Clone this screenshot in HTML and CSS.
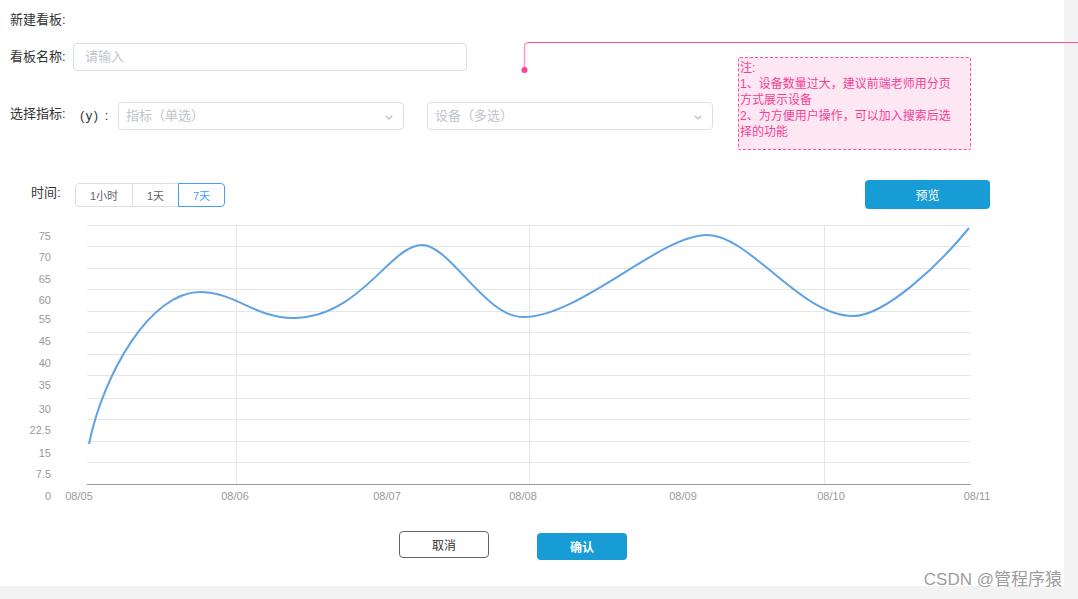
FILE: index.html
```html
<!DOCTYPE html>
<html lang="zh-CN">
<head>
<meta charset="utf-8">
<title>新建看板</title>
<link rel="stylesheet" href="styles.css">
</head>
<body>
<div class="page">
  <div class="title">新建看板:</div>

  <div class="row row-name">
    <span class="label">看板名称:</span>
    <div class="input"><span class="ph">请输入</span></div>
  </div>

  <div class="row row-metric">
    <span class="label">选择指标:</span>
    <span class="axis-tag">(y) :</span>
    <div class="select">
      <span class="ph">指标（单选）</span>
      <svg class="chev" width="8" height="5" viewBox="0 0 8 5"><polyline points="0.8,0.8 4,4 7.2,0.8" fill="none" stroke="#b4b8c0" stroke-width="1.1"/></svg>
    </div>
    <div class="select">
      <span class="ph">设备（多选）</span>
      <svg class="chev" width="8" height="5" viewBox="0 0 8 5"><polyline points="0.8,0.8 4,4 7.2,0.8" fill="none" stroke="#b4b8c0" stroke-width="1.1"/></svg>
    </div>
  </div>

  <div class="row row-time">
    <span class="time-label">时间:</span>
    <div class="seg">
      <span class="seg-btn first">1小时</span>
      <span class="seg-btn">1天</span>
      <span class="seg-btn last active">7天</span>
    </div>
    <button class="btn-preview">预览</button>
  </div>

  <svg class="chart" width="1000" height="295" viewBox="0 215 1000 295">
    <g class="grid">
      <line x1="87" x2="971" y1="225.5" y2="225.5"/>
      <line x1="87" x2="971" y1="246.5" y2="246.5"/>
      <line x1="87" x2="971" y1="268.5" y2="268.5"/>
      <line x1="87" x2="971" y1="289.5" y2="289.5"/>
      <line x1="87" x2="971" y1="311.5" y2="311.5"/>
      <line x1="87" x2="971" y1="332.5" y2="332.5"/>
      <line x1="87" x2="971" y1="354.5" y2="354.5"/>
      <line x1="87" x2="971" y1="375.5" y2="375.5"/>
      <line x1="87" x2="971" y1="398.5" y2="398.5"/>
      <line x1="87" x2="971" y1="419.5" y2="419.5"/>
      <line x1="87" x2="971" y1="441.5" y2="441.5"/>
      <line x1="87" x2="971" y1="462.5" y2="462.5"/>
      <line x1="236.5" x2="236.5" y1="225" y2="484"/>
      <line x1="529.5" x2="529.5" y1="225" y2="484"/>
      <line x1="824.5" x2="824.5" y1="225" y2="484"/>
    </g>
    <line class="axis" x1="87" x2="971" y1="484.5" y2="484.5"/>
    <g class="ylab">
      <text x="51" y="240">75</text>
      <text x="51" y="261">70</text>
      <text x="51" y="283">65</text>
      <text x="51" y="304">60</text>
      <text x="51" y="323">55</text>
      <text x="51" y="345">45</text>
      <text x="51" y="367">40</text>
      <text x="51" y="389">35</text>
      <text x="51" y="413">30</text>
      <text x="51" y="434">22.5</text>
      <text x="51" y="457">15</text>
      <text x="51" y="478">7.5</text>
      <text x="51" y="500">0</text>
    </g>
    <g class="xlab">
      <text x="79" y="500">08/05</text>
      <text x="235" y="500">08/06</text>
      <text x="387" y="500">08/07</text>
      <text x="523" y="500">08/08</text>
      <text x="683" y="500">08/09</text>
      <text x="831" y="500">08/10</text>
      <text x="977" y="500">08/11</text>
    </g>
    <path class="series" d="M89,444 C103,375 150,292 200,292 C235,292 255,318 293,318 C360,318 390,245 422,245 C450,245 485,317 523,317 C580,317 660,235 707,235 C750,235 800,316 853,316 C885,316 939,265 969,228"/>
  </svg>

  <div class="row row-actions">
    <button class="btn-cancel">取消</button>
    <button class="btn-ok">确认</button>
  </div>

  <div class="note">注:<br>1、设备数量过大，建议前端老师用分页方式展示设备<br>2、为方便用户操作，可以加入搜索后选择的功能</div>
</div>

<svg class="connector" width="560" height="40" viewBox="518 36 560 40">
  <path d="M524.5,70 V47 Q524.5,42.5 529,42.5" fill="none" stroke="#ff9acb" stroke-width="1.5"/>
  <path d="M528,42.5 H1078" fill="none" stroke="#ff4fa0" stroke-width="1.2"/>
  <circle cx="524.5" cy="70" r="3" fill="#ff3d96"/>
</svg>

<div class="watermark">CSDN @管程序猿</div>
</body>
</html>
```

FILE: styles.css
```css
* { box-sizing: border-box; }
html, body { margin: 0; padding: 0; }
body {
  background: #f3f3f3;
  width: 1078px;
  height: 599px;
  overflow: hidden;
  position: relative;
  font-family: "Liberation Sans", "Noto Sans CJK SC", sans-serif;
  color: #333;
}
.page {
  width: 1064px;
  height: 586px;
  background: #fff;
  position: relative;
  padding-top: 10px;
}
.title {
  font-size: 13px;
  line-height: 20px;
  padding-left: 10px;
}
.row { display: flex; align-items: center; }
.row-name { margin-top: 13px; padding-left: 10px; height: 28px; }
.label { width: 63px; font-size: 13px; line-height: 20px; flex: none; }
.input {
  width: 394px;
  height: 28px;
  border: 1px solid #dcdfe6;
  border-radius: 4px;
  padding-left: 11px;
  display: flex;
  align-items: center;
}
.ph { color: #c0c4cc; font-size: 13px; line-height: 20px; }
.row-metric { margin-top: 31px; padding-left: 10px; height: 28px; }
.row-metric .label { margin-bottom: 4px; }
.axis-tag {
  margin-left: 7px;
  width: 38px;
  font-size: 13px;
  letter-spacing: 1.5px;
  margin-bottom: 2px;
}
.select {
  width: 286px;
  height: 28px;
  border: 1px solid #dcdfe6;
  border-radius: 4px;
  padding: 0 10px 0 7px;
  display: flex;
  align-items: center;
  justify-content: space-between;
}
.select + .select { margin-left: 23px; }
.chev { display: block; margin-top: 3px; }

.row-time {
  margin-top: 50px;
  padding-left: 31px;
  padding-right: 74px;
  align-items: flex-start;
}
.time-label { width: 44px; font-size: 13px; line-height: 20px; margin-top: 3px; }
.seg { display: flex; margin-top: 3px; }
.seg-btn {
  width: 47px;
  height: 24px;
  border: 1px solid #dcdfe6;
  font-size: 11px;
  color: #606266;
  display: flex;
  align-items: center;
  justify-content: center;
  background: #fff;
}
.seg-btn + .seg-btn { margin-left: -1px; }
.seg-btn.first { width: 58px; border-radius: 4px 0 0 4px; }
.seg-btn.last { border-radius: 0 4px 4px 0; }
.seg-btn.active { border-color: #409eff; color: #409eff; position: relative; z-index: 1; }
.btn-preview {
  margin-left: auto;
  width: 125px;
  height: 29px;
  background: #179cd6;
  border: none;
  border-radius: 4px;
  color: #fff;
  font-size: 12px;
  font-family: inherit;
  padding: 0;
}

.chart { display: block; margin-top: 6px; }
.grid line { stroke: #e6e6e6; stroke-width: 1; }
.axis { stroke: #9a9a9a; stroke-width: 1; }
.ylab text { text-anchor: end; font-size: 11px; fill: #9c9a97; font-family: "Liberation Sans", sans-serif; }
.xlab text { text-anchor: middle; font-size: 11px; fill: #9c9a97; font-family: "Liberation Sans", sans-serif; }
.series { fill: none; stroke: #5ea2e5; stroke-width: 2; }

.row-actions { margin-top: 21px; padding-left: 399px; align-items: flex-start; }
.btn-cancel {
  width: 90px;
  height: 27px;
  border: 1px solid #666;
  border-radius: 4px;
  background: #fff;
  font-size: 12px;
  color: #333;
  font-family: inherit;
  padding: 0;
}
.btn-ok {
  margin-left: 48px;
  margin-top: 2px;
  width: 90px;
  height: 27px;
  border: none;
  border-radius: 4px;
  background: #179cd6;
  color: #fff;
  font-size: 12px;
  font-weight: bold;
  font-family: inherit;
  padding: 0;
}

.note {
  position: absolute;
  left: 738px;
  top: 57px;
  width: 233px;
  height: 93px;
  border: 1px dashed #ff4fa0;
  border-radius: 2px;
  background: #fde7f2;
  color: #f53f98;
  font-size: 12px;
  line-height: 16px;
  padding: 2px 10px 0 1px;
}

.connector {
  position: absolute;
  left: 518px;
  top: 36px;
  display: block;
}

.watermark {
  position: absolute;
  right: 16px;
  top: 569px;
  font-size: 17px;
  line-height: 22px;
  color: #9d9d9d;
  font-family: "Liberation Sans", "Noto Sans CJK SC", sans-serif;
}
```
